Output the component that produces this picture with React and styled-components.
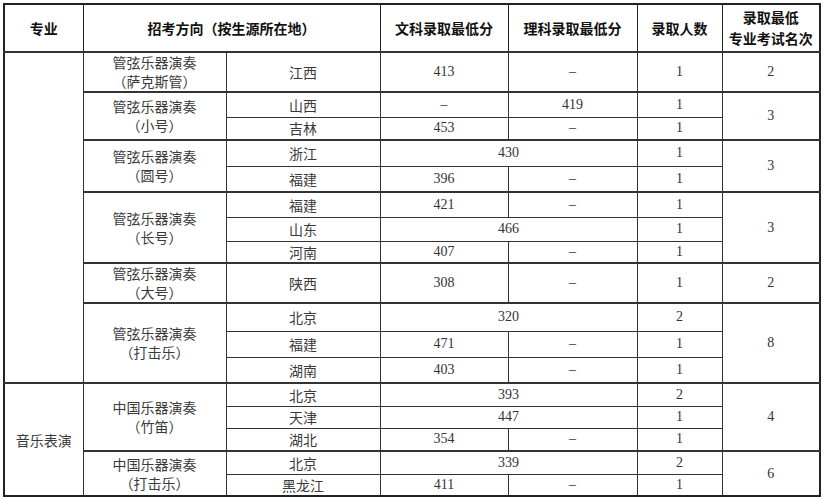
import React from 'react'
import styled, { createGlobalStyle } from 'styled-components'

const GlobalStyle = createGlobalStyle`
    html, body {
        margin: 0;
        padding: 0;
        background: #fff;
    }
    body {
        padding: 3px 0 0 3px;
    }
`

const Table = styled.table`
    border-collapse: collapse;
    table-layout: fixed;
    width: 816px;
    border: 2px solid #222;
    font-family: "Liberation Serif", "Noto Sans CJK SC", serif;
    font-size: 14px;
    color: #333;
`

const Head = styled.th`
    border: 1px solid #222;
    font-family: "Noto Sans CJK SC", sans-serif;
    font-weight: 700;
    color: #111;
    font-size: 14px;
    line-height: 21px;
    padding: 0;
    text-align: center;
    vertical-align: middle;
`

const Cell = styled.td`
    border: 1px solid #333;
    border-top-width: ${p => (p.$group ? '2px' : '1px')};
    padding: 0;
    text-align: center;
    vertical-align: middle;
    line-height: 18px;
    white-space: nowrap;
`

const Label = styled(Cell)`
    font-family: "Noto Sans CJK SC", sans-serif;
    font-weight: 400;
    color: #3a3a3a;
    line-height: ${p => (p.$double ? '19px' : '18px')};
`

const Row = styled.tr`
    height: ${p => p.$h}px;
`

const groups = [
    { name: '管弦乐器演奏', sub: '萨克斯管', rank: 2, rows: [['江西', 413, '–', 1, 40]] },
    { name: '管弦乐器演奏', sub: '小号', rank: 3, rows: [['山西', '–', 419, 1, 25], ['吉林', 453, '–', 1, 23]] },
    { name: '管弦乐器演奏', sub: '圆号', rank: 3, rows: [['浙江', 430, null, 1, 26], ['福建', 396, '–', 1, 26]] },
    {
        name: '管弦乐器演奏', sub: '长号', rank: 3, rows: [
            ['福建', 421, '–', 1, 25], ['山东', 466, null, 1, 24], ['河南', 407, '–', 1, 22]
        ]
    },
    { name: '管弦乐器演奏', sub: '大号', rank: 2, rows: [['陕西', 308, '–', 1, 40]] },
    {
        name: '管弦乐器演奏', sub: '打击乐', rank: 8, rows: [
            ['北京', 320, null, 2, 28], ['福建', 471, '–', 1, 26], ['湖南', 403, '–', 1, 26]
        ]
    },
    {
        name: '中国乐器演奏', sub: '竹笛', rank: 4, major: '音乐表演', rows: [
            ['北京', 393, null, 2, 23], ['天津', 447, null, 1, 22], ['湖北', 354, '–', 1, 23]
        ]
    },
    {
        name: '中国乐器演奏', sub: '打击乐', rank: 6, rows: [
            ['北京', 339, null, 2, 23], ['黑龙江', 411, '–', 1, 22]
        ]
    },
]

const App = () => {
    const firstSpan = groups.slice(0, 6).reduce((n, g) => n + g.rows.length, 0)
    const secondSpan = groups.slice(6).reduce((n, g) => n + g.rows.length, 0)

    return (
        <>
            <GlobalStyle />
            <Table>
                <colgroup>
                    <col style={{ width: 79 }} />
                    <col style={{ width: 143 }} />
                    <col style={{ width: 154 }} />
                    <col style={{ width: 128 }} />
                    <col style={{ width: 129 }} />
                    <col style={{ width: 85 }} />
                    <col style={{ width: 98 }} />
                </colgroup>
                <thead>
                    <Row $h={48}>
                        <Head>专业</Head>
                        <Head colSpan={2}>招考方向（按生源所在地）</Head>
                        <Head>文科录取最低分</Head>
                        <Head>理科录取最低分</Head>
                        <Head>录取人数</Head>
                        <Head>录取最低<br />专业考试名次</Head>
                    </Row>
                </thead>
                <tbody>
                    {groups.map((g, gi) =>
                        g.rows.map((r, ri) => (
                            <Row $h={r[4]} key={`${gi}-${ri}`}>
                                {gi === 0 && ri === 0 && <Label $group rowSpan={firstSpan}></Label>}
                                {gi === 6 && ri === 0 && <Label $group rowSpan={secondSpan}>{g.major}</Label>}
                                {ri === 0 && (
                                    <Label $group $double rowSpan={g.rows.length}>
                                        {g.name}<br />（{g.sub}）
                                    </Label>
                                )}
                                <Label $group={ri === 0}>{r[0]}</Label>
                                {r[2] === null ? (
                                    <Cell $group={ri === 0} colSpan={2}>{r[1]}</Cell>
                                ) : (
                                    <>
                                        <Cell $group={ri === 0}>{r[1]}</Cell>
                                        <Cell $group={ri === 0}>{r[2]}</Cell>
                                    </>
                                )}
                                <Cell $group={ri === 0}>{r[3]}</Cell>
                                {ri === 0 && <Cell $group rowSpan={g.rows.length}>{g.rank}</Cell>}
                            </Row>
                        ))
                    )}
                </tbody>
            </Table>
        </>
    )
}

export default App
